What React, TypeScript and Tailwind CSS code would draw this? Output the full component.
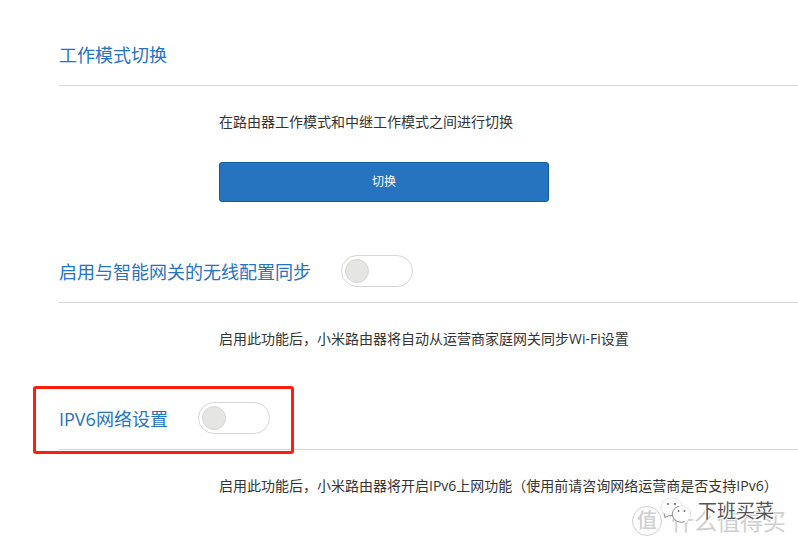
import { useState } from 'react'
import type { ReactNode } from 'react'

interface SwitchProps {
  id: string
  checked: boolean
  onChange(checked: boolean): void
}

function Switch({ id, checked, onChange }: SwitchProps) {
  return (
    <input
      id={id}
      type="checkbox"
      role="switch"
      checked={checked}
      onChange={(e) => onChange(e.target.checked)}
      className="flex h-8 w-[72px] shrink-0 cursor-pointer appearance-none items-center rounded-full border border-[#d6d6d6] bg-white px-[3px] before:size-6 before:rounded-full before:border before:border-[#d6d6d6] before:bg-[#e5e5e3] checked:justify-end checked:bg-[#2673bf]"
    />
  )
}

interface SectionProps {
  title: ReactNode
  control?: ReactNode
  highlighted?: boolean
  children: ReactNode
}

function Section({ title, control, highlighted, children }: SectionProps) {
  return (
    <section className="relative">
      <div className="flex h-[62px] items-end gap-[30px] border-b border-[#d6d6d6] pb-[15px]">
        <h2 className="text-lg/[30px] text-[#2673bf]">{title}</h2>
        {control}
      </div>
      {highlighted && (
        <div className="pointer-events-none absolute -top-0.5 -left-[26px] h-[68px] w-[261px] rounded-[3px] border-3 border-[#ff1d0d]" />
      )}
      <div className="pt-6 pl-40 text-sm/6 text-[#333]">{children}</div>
    </section>
  )
}

function WechatIcon() {
  return (
    <svg viewBox="0 0 32 28" className="h-7 w-8" fill="#fff" strokeWidth="0.8">
      <path
        stroke="#dcdcdc"
        d="M11.500 1C5.500 1 1 5 1 10.200c0 3 1.500 5.400 3.900 7L4.200 21l4-2.200c1 .3 2.100.5 3.300.5 6 0 10.500-4 10.500-9.100S17.500 1 11.500 1Z"
      />
      <path stroke="#777" fill="none" d="M3.900 16.500l1.200 4 3.600-1.900h4" />
      <path
        stroke="#dcdcdc"
        d="M21.500 9c-5.200 0-9.200 3.600-9.200 8.100s4 8.100 9.200 8.100c1.100 0 2.100-.2 3.100-.5l3.400 2-.8-3.100c2.200-1.500 3.500-3.800 3.500-6.500 0-4.500-4-8.100-9.200-8.100Z"
      />
      <path stroke="#777" fill="none" d="M19 9.400c-4 1-6.700 4.100-6.700 7.700 0 4.500 4 8.100 9.200 8.100 1.100 0 2.100-.2 3.100-.5" />
      <g fill="#666" stroke="none">
        <circle cx="8" cy="7" r="1" />
        <circle cx="15" cy="7" r="1" />
        <circle cx="18.500" cy="14" r="0.900" />
        <circle cx="24.500" cy="14" r="0.900" />
      </g>
    </svg>
  )
}

function Watermark() {
  return (
    <div className="pointer-events-none absolute right-3 bottom-1.5 h-9 w-[154px] whitespace-nowrap">
      <div className="flex h-full items-center gap-[9px] text-[23px] text-[#cfcfcf]">
        <span className="flex size-[30px] shrink-0 items-center justify-center rounded-full border border-[#cfcfcf] text-xl font-medium">
          值
        </span>
        <span>什么值得买</span>
      </div>
      <div className="absolute -top-1.5 left-7 flex items-center gap-1.5">
        <WechatIcon />
        <span className="text-[19px] text-[#555] [text-shadow:1px_1px_0_#fff,-1px_-1px_0_#fff]">下班买菜</span>
      </div>
    </div>
  )
}

export default function App() {
  const [sync, setSync] = useState(false)
  const [ipv6, setIpv6] = useState(false)

  return (
    <main className="relative min-h-screen overflow-hidden bg-white pt-6 pl-[59px] font-['Open_Sans','Noto_Sans_CJK_SC',sans-serif]">
      <div className="flex flex-col gap-[37px]">
        <Section title="工作模式切换">
          <p>在路由器工作模式和中继工作模式之间进行切换</p>
          <button
            type="button"
            className="mt-7 mb-0.5 block h-10 w-[330px] cursor-pointer rounded-[3px] border border-[#135a9f] bg-[#2673bf] text-xs text-white"
          >
            切换
          </button>
        </Section>
        <Section
          title={<label htmlFor="sync">启用与智能网关的无线配置同步</label>}
          control={<Switch id="sync" checked={sync} onChange={setSync} />}
        >
          <p>启用此功能后，小米路由器将自动从运营商家庭网关同步Wi-Fi设置</p>
        </Section>
        <Section
          title={<label htmlFor="ipv6">IPV6网络设置</label>}
          control={<Switch id="ipv6" checked={ipv6} onChange={setIpv6} />}
          highlighted
        >
          <p>启用此功能后，小米路由器将开启IPv6上网功能（使用前请咨询网络运营商是否支持IPv6）</p>
        </Section>
      </div>
      <Watermark />
    </main>
  )
}
